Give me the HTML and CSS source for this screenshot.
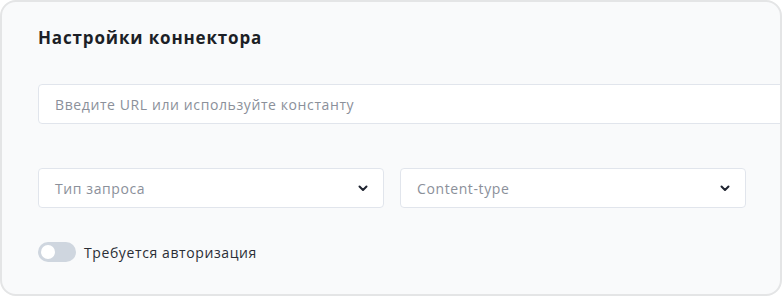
FILE: index.html
```
<!DOCTYPE html>
<html lang="ru">
<head>
    <meta charset="UTF-8">
    <meta name="viewport" content="width=device-width, initial-scale=1.0">
    <title>Настройки коннектора</title>
    <link rel="stylesheet" href="styles.css">
</head>
<body>
    <div class="card">
        <h2 class="card-title">Настройки коннектора</h2>

        <div class="url-row">
            <input type="text" class="field" placeholder="Введите URL или используйте константу">
        </div>

        <div class="select-row">
            <div class="select-box">
                <span class="select-placeholder">Тип запроса</span>
                <svg class="chevron" width="10" height="7" viewBox="0 0 10 7">
                    <path d="M1.5 1.5 L5 5 L8.5 1.5" fill="none" stroke="#1f2430" stroke-width="2" stroke-linecap="round" stroke-linejoin="round"/>
                </svg>
            </div>
            <div class="select-box">
                <span class="select-placeholder">Content-type</span>
                <svg class="chevron" width="10" height="7" viewBox="0 0 10 7">
                    <path d="M1.5 1.5 L5 5 L8.5 1.5" fill="none" stroke="#1f2430" stroke-width="2" stroke-linecap="round" stroke-linejoin="round"/>
                </svg>
            </div>
        </div>

        <label class="switch-row">
            <span class="switch"><span class="switch-knob"></span></span>
            <span class="switch-label">Требуется авторизация</span>
        </label>
    </div>
</body>
</html>
```

FILE: styles.css
```
body {
    margin: 0;
    padding: 0;
    font-family: 'Open Sans', 'Noto Sans', sans-serif;
    background: #ffffff;
    color: #1f2430;
}
.card {
    box-sizing: border-box;
    width: 782px;
    height: 296px;
    border: 2px solid #e4e5e6;
    border-radius: 16px;
    background: #f9fafb;
    padding: 24px 0 0 36px;
    overflow: hidden;
}
.card-title {
    margin: 0;
    font-size: 17px;
    line-height: 24px;
    font-weight: 700;
    letter-spacing: 0.85px;
    color: #1c1f26;
}
.url-row {
    margin-top: 34px;
}
.field {
    box-sizing: border-box;
    display: block;
    width: 760px;
    height: 40px;
    padding: 0 16px;
    border: 1px solid #e1e5ec;
    border-radius: 4px;
    background: #ffffff;
    font-family: inherit;
    font-size: 14px;
    letter-spacing: 0.6px;
    color: #1f2430;
    outline: none;
}
.field::placeholder {
    color: #8b909a;
}
.select-row {
    display: grid;
    grid-template-columns: 346px 346px;
    column-gap: 16px;
    margin-top: 44px;
}
.select-box {
    box-sizing: border-box;
    height: 40px;
    display: flex;
    align-items: center;
    justify-content: space-between;
    padding: 0 15px 0 16px;
    border: 1px solid #e1e5ec;
    border-radius: 4px;
    background: #ffffff;
}
.select-placeholder {
    font-size: 14px;
    letter-spacing: 0.6px;
    color: #8b909a;
}
.chevron {
    display: block;
}
.switch-row {
    display: flex;
    align-items: center;
    gap: 8px;
    margin-top: 34px;
    cursor: pointer;
}
.switch {
    position: relative;
    width: 38px;
    height: 20px;
    border-radius: 10px;
    background: #cfd6df;
}
.switch-knob {
    position: absolute;
    top: 3px;
    left: 3px;
    width: 14px;
    height: 14px;
    border-radius: 50%;
    background: #ffffff;
}
.switch-label {
    font-size: 14px;
    letter-spacing: 0.6px;
    color: #2a2e36;
}
```
